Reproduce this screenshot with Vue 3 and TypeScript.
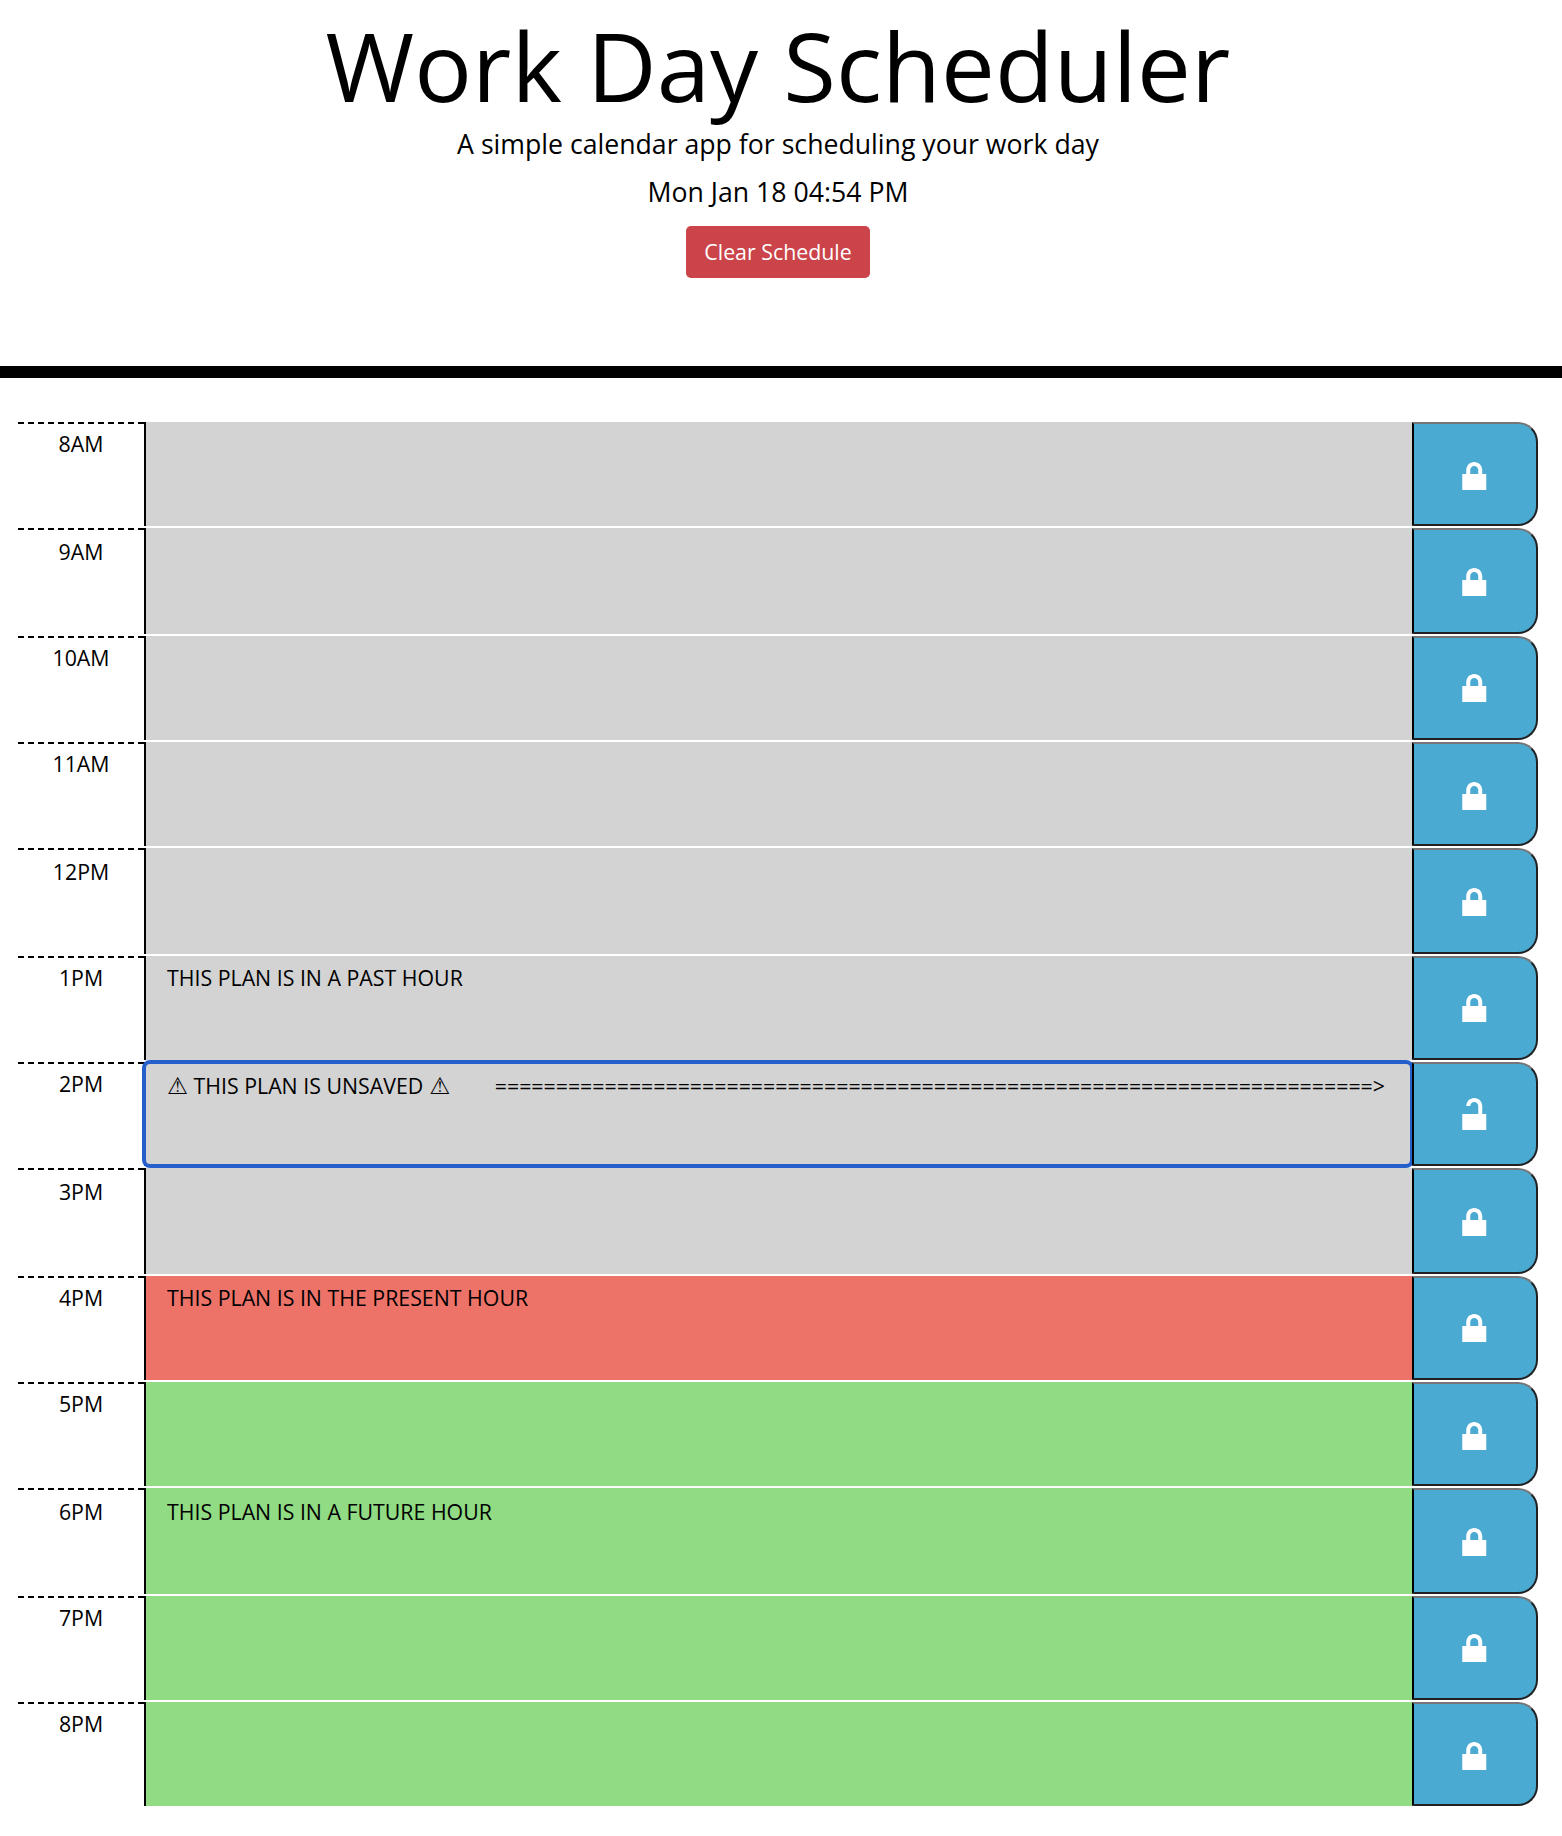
<script setup lang="ts">
type Phase = 'past' | 'present' | 'future'

interface Slot {
  label: string
  phase: Phase
  plan: string
  tall: boolean
  raised: boolean
  unsaved: boolean
}

const labels = ['8AM', '9AM', '10AM', '11AM', '12PM', '1PM', '2PM', '3PM', '4PM', '5PM', '6PM', '7PM', '8PM']
const currentIndex = 8

const plans: Record<string, string> = {
  '1PM': 'THIS PLAN IS IN A PAST HOUR',
  '4PM': 'THIS PLAN IS IN THE PRESENT HOUR',
  '6PM': 'THIS PLAN IS IN A FUTURE HOUR',
}

const arrow = '='.repeat(72) + '>'

const slots: Slot[] = labels.map((label, i) => ({
  label,
  phase: i < currentIndex ? 'past' : i === currentIndex ? 'present' : 'future',
  plan: plans[label] ?? '',
  tall: i % 3 === 1,
  raised: i % 3 === 2,
  unsaved: label === '2PM',
}))
</script>

<template>
  <div class="page">
    <header class="jumbotron">
      <h1 class="title">Work Day Scheduler</h1>
      <p class="lead">A simple calendar app for scheduling your work day</p>
      <p class="today">Mon Jan 18 04:54 PM</p>
      <button class="clear" type="button">Clear Schedule</button>
    </header>
    <main class="schedule">
      <div v-for="s in slots" :key="s.label" class="row" :class="{ tall: s.tall, raised: s.raised }">
        <div class="hour">{{ s.label }}</div>
        <div class="plan" :class="[s.phase, { focused: s.unsaved }]">
          <template v-if="s.unsaved">
            <span class="warn">⚠</span>
            <span class="note">THIS PLAN IS UNSAVED</span>
            <span class="warn">⚠</span>
            <span class="arrow">{{ arrow }}</span>
          </template>
          <span v-else>{{ s.plan }}</span>
        </div>
        <button class="save" type="button">
          <svg class="lock" viewBox="-0.0625 0 8 8">
            <path v-if="s.unsaved" d="M4 0c-1.1 0-2 .9-2 2h1c0-.56.44-1 1-1s1 .44 1 1v2h-4v4h6v-4h-1v-2c0-1.1-.9-2-2-2z" />
            <path v-else d="M4 1c-1.1 0-2 .9-2 2v1h-1v4h6v-4h-1v-1c0-1.1-.9-2-2-2zm0 1c.56 0 1 .44 1 1v1h-2v-1c0-.56.44-1 1-1z" />
          </svg>
        </button>
      </div>
    </main>
  </div>
</template>

<style>
body {
  margin: 0;
  background: #fff;
}
</style>

<style scoped>
.page {
  height: 1836px;
  overflow: hidden;
  font-family: 'Open Sans', sans-serif;
  color: #000;
}
.jumbotron {
  box-sizing: border-box;
  height: 378px;
  padding: 7px 6px 0 0;
  border-bottom: 12px solid #000;
  display: flex;
  flex-direction: column;
  align-items: center;
}
.title {
  margin: 0;
  font-size: 96px;
  font-weight: 400;
  line-height: 115px;
  letter-spacing: 0.08px;
  white-space: nowrap;
}
.lead,
.today {
  margin: 1px 0 0;
  font-size: 26.667px;
  line-height: 42px;
  white-space: nowrap;
}
.today {
  margin-top: 6px;
}
.clear {
  box-sizing: border-box;
  width: 184px;
  height: 52px;
  margin-top: 13px;
  padding: 0;
  border: 0;
  border-radius: 5px;
  background: #cb444a;
  color: #fff;
  font: 21.333px/52px 'Open Sans', sans-serif;
  white-space: nowrap;
}
.schedule {
  display: flex;
  flex-direction: column;
  gap: 2px;
  padding: 44px 0 0 18px;
}
.row {
  display: flex;
  width: 1520px;
  height: 104px;
}
.row.tall {
  height: 106px;
}
.hour {
  box-sizing: border-box;
  width: 126px;
  height: 100%;
  padding-top: 5px;
  background: repeating-linear-gradient(90deg, #000 0 6px, transparent 6px 10px) 0 0 / 100% 2px no-repeat;
  font-size: 21.333px;
  line-height: 34px;
  text-align: center;
}
.tall .hour,
.tall .plan {
  padding-top: 7px;
}
.plan {
  box-sizing: border-box;
  position: relative;
  display: flex;
  align-items: flex-start;
  width: 1268px;
  padding: 5px 0 0 21px;
  border-left: 2px solid #000;
  font-size: 21.333px;
  line-height: 34px;
  white-space: pre;
}
.past {
  background: #d3d3d3;
}
.present {
  background: #ed7369;
}
.future {
  background: #90db83;
}
.plan.focused {
  padding-top: 7px;
  z-index: 1;
}
.focused::after {
  content: '';
  position: absolute;
  inset: -2px -2px -2px -4px;
  border: 4px solid #245fcb;
  border-radius: 8px;
}
.warn {
  flex: none;
  display: flex;
  justify-content: center;
  width: 21px;
  font-family: 'DejaVu Sans', sans-serif;
  font-size: 23.5px;
}
.note {
  flex: none;
  margin: 0 6px 0 5.5px;
}
.arrow {
  flex: none;
  margin-left: 44.5px;
}
.save {
  box-sizing: border-box;
  position: relative;
  z-index: 2;
  flex: none;
  display: flex;
  align-items: flex-start;
  width: 126px;
  height: 100%;
  padding: 34px 0 0 44px;
  border: 2px solid #212121;
  border-top-color: #767676;
  border-left-color: #000;
  border-radius: 0 20px 20px 0;
  background: #4aaad1;
}
.raised .save {
  padding-top: 32px;
}
.lock {
  display: block;
  flex: none;
  width: 32px;
  height: 32px;
  fill: #fff;
}
</style>
